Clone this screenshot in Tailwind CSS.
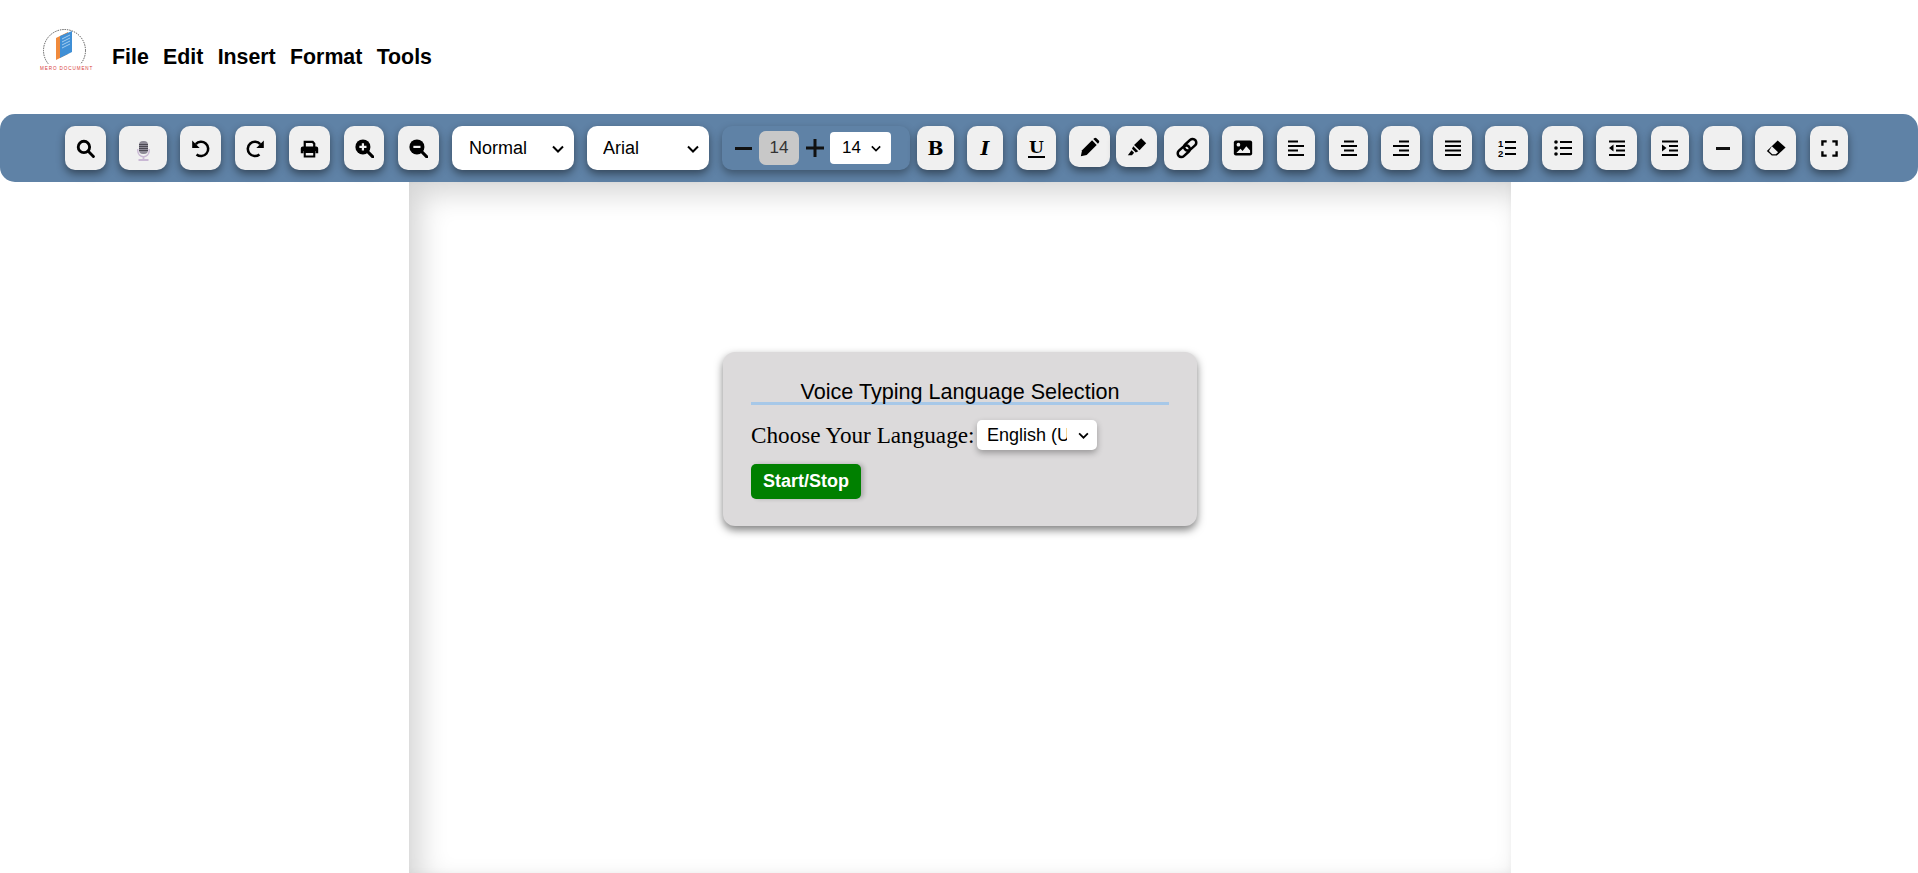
<!doctype html>
<html lang="en">
  <head>
    <meta charset="UTF-8" />
    <title>Mero Document</title>
    <script src="https://cdn.jsdelivr.net/npm/@tailwindcss/browser@4"></script>
  </head>
  <body class="h-[873px] overflow-hidden bg-white font-['Liberation_Sans',Arial,sans-serif] text-black">
    <!-- header -->
    <header class="flex h-[114px] items-center pl-[38px]">
      <svg class="mb-[16px] h-[46px] w-[58px]" viewBox="0 0 58 46" aria-label="logo">
        <circle cx="26.500" cy="24.500" r="21" fill="none" stroke="#444" stroke-width="0.9" stroke-dasharray="1.400 1" />
        <rect x="0" y="38" width="58" height="8" fill="#fff" />
        <polygon points="18,12 30,6 30,28 18,34" fill="#f08a3c" />
        <polygon points="22,10 34,5 34,26 22,32" fill="#3f8fd6" />
        <g stroke="#bcdcf5" stroke-width="0.8">
          <line x1="24" y1="13" x2="32" y2="9" />
          <line x1="24" y1="16" x2="32" y2="12" />
          <line x1="24" y1="19" x2="32" y2="15" />
          <line x1="24" y1="22" x2="32" y2="18" />
        </g>
        <text x="2" y="43.500" font-family="Liberation Sans" font-size="4.600" letter-spacing="0.900" fill="#d83c3c">MERO DOCUMENT</text>
      </svg>
      <nav class="ml-[16px] mt-[1px] flex gap-[14.300px] text-[21.330px] font-bold leading-none">
        <span>File</span>
        <span>Edit</span>
        <span>Insert</span>
        <span>Format</span>
        <span>Tools</span>
      </nav>
    </header>

    <!-- toolbar -->
    <div class="relative z-10 flex h-[68px] items-start rounded-[15px] bg-[#5f82a6] pl-[65px] pt-3">
      <button class="flex h-11 w-[41px] items-center justify-center rounded-[10px] bg-[#f0f0f0] shadow-[0_4px_8px_rgba(0,0,0,0.45)]">
        <svg class="size-[19px]" viewBox="0 0 24 24" fill="none" stroke="currentColor" stroke-width="3.600"><circle cx="10" cy="10" r="7.200" /><path d="M15.500 15.500 22 22" stroke-linecap="round" /></svg>
      </button>
      <button class="ml-[13px] flex h-11 w-12 items-center justify-center rounded-[10px] bg-[#f0f0f0] shadow-[0_4px_8px_rgba(0,0,0,0.45)]">
        <svg class="mt-[5px] h-[20px] w-[13px]" viewBox="0 0 13 20"><rect x="2" y="0" width="9" height="13" rx="4" fill="#8d8a96" /><path d="M2 3.500h9M2 5.500h9M2 7.500h9M2 9.500h9" stroke="#4c4953" stroke-width="1" /><path d="M.8 8v2a5.700 5.700 0 0 0 11.400 0V8" fill="none" stroke="#c9b8d4" stroke-width="1.400" /><path d="M6.500 15v3M1.500 19h10" stroke="#c9b8d4" stroke-width="1.800" /></svg>
      </button>
      <button class="ml-[13px] flex h-11 w-[41px] items-center justify-center rounded-[10px] bg-[#f0f0f0] shadow-[0_4px_8px_rgba(0,0,0,0.45)]">
        <svg class="size-[19px]" viewBox="0 0 24 24" fill="none"><path d="M6 6.500A9 9 0 1 1 7 19.500" stroke="currentColor" stroke-width="3.200" /><path d="M1.500 2v9.500H11z" fill="currentColor" /></svg>
      </button>
      <button class="ml-[14px] flex h-11 w-[41px] items-center justify-center rounded-[10px] bg-[#f0f0f0] shadow-[0_4px_8px_rgba(0,0,0,0.45)]">
        <svg class="size-[19px]" viewBox="0 0 24 24" fill="none"><path d="M18 6.500A9 9 0 1 0 17 19.500" stroke="currentColor" stroke-width="3.200" /><path d="M22.500 2v9.500H13z" fill="currentColor" /></svg>
      </button>
      <button class="ml-[13px] flex h-11 w-[41px] items-center justify-center rounded-[10px] bg-[#f0f0f0] shadow-[0_4px_8px_rgba(0,0,0,0.45)]">
        <svg class="size-[19px]" viewBox="0 0 24 24"><path d="M6 10V3.500h10L18 6v4" fill="none" stroke="currentColor" stroke-width="2.800" /><path d="M3.500 9.500h17A2.500 2.500 0 0 1 23 12v6h-3.500v-3h-15v3H1v-6a2.500 2.500 0 0 1 2.500-2.500z" fill="currentColor" /><path d="M6 16.500h12V22H6z" fill="none" stroke="currentColor" stroke-width="2.600" /></svg>
      </button>
      <button class="ml-[14px] flex h-11 w-[40px] items-center justify-center rounded-[10px] bg-[#f0f0f0] shadow-[0_4px_8px_rgba(0,0,0,0.45)]">
        <svg class="size-[19px]" viewBox="0 0 24 24"><circle cx="10" cy="10" r="9.500" fill="currentColor" /><path d="M16 16l6.500 6.500" stroke="currentColor" stroke-width="3.800" stroke-linecap="round" /><path d="M10 5.500v9M5.500 10h9" stroke="#f0f0f0" stroke-width="2.800" /></svg>
      </button>
      <button class="ml-[14px] flex h-11 w-[41px] items-center justify-center rounded-[10px] bg-[#f0f0f0] shadow-[0_4px_8px_rgba(0,0,0,0.45)]">
        <svg class="size-[19px]" viewBox="0 0 24 24"><circle cx="10" cy="10" r="9.500" fill="currentColor" /><path d="M16 16l6.500 6.500" stroke="currentColor" stroke-width="3.800" stroke-linecap="round" /><path d="M5.500 10h9" stroke="#f0f0f0" stroke-width="2.800" /></svg>
      </button>
      <div class="relative ml-[13px] h-11 w-[122px]">
        <select class="h-11 w-full appearance-none rounded-[10px] bg-white pl-[17px] text-[18px] shadow-[0_4px_8px_rgba(0,0,0,0.45)]">
          <option>Normal</option>
        </select>
        <svg class="pointer-events-none absolute right-[10px] top-[19px] h-[8px] w-[12px]" viewBox="0 0 12 8" fill="none" stroke="currentColor" stroke-width="2"><path d="M1 1.500l5 5 5-5" /></svg>
      </div>
      <div class="relative ml-[13px] h-11 w-[122px]">
        <select class="h-11 w-full appearance-none rounded-[10px] bg-white pl-4 text-[18px] shadow-[0_4px_8px_rgba(0,0,0,0.45)]">
          <option>Arial</option>
        </select>
        <svg class="pointer-events-none absolute right-[10px] top-[19px] h-[8px] w-[12px]" viewBox="0 0 12 8" fill="none" stroke="currentColor" stroke-width="2"><path d="M1 1.500l5 5 5-5" /></svg>
      </div>
      <!-- font size group -->
      <div class="ml-[13px] flex h-11 w-[188px] items-center rounded-[10px] bg-[#5f82a6] pl-[13px] shadow-[0_4px_8px_rgba(0,0,0,0.35)]">
        <span class="h-[3px] w-[17px] bg-[#111]"></span>
        <span class="ml-[7px] flex h-[34px] w-10 items-center justify-center rounded-[7px] bg-[#c8c8c8] text-[17px] text-[#333]">14</span>
        <svg class="ml-[7px] size-[18px]" viewBox="0 0 18 18"><path d="M9 0v18M0 9h18" stroke="#111" stroke-width="3" /></svg>
        <div class="relative ml-[6px] h-8 w-[61px]">
          <select class="h-8 w-full appearance-none rounded-[4px] bg-white pl-3 text-[17px]">
            <option>14</option>
          </select>
          <svg class="pointer-events-none absolute right-[10px] top-[13px] h-[7px] w-[10px]" viewBox="0 0 12 8" fill="none" stroke="currentColor" stroke-width="2"><path d="M1 1.500l5 5 5-5" /></svg>
        </div>
      </div>
      <button class="ml-[7px] flex h-11 w-[37px] items-center justify-center rounded-[10px] bg-[#f0f0f0] font-['DejaVu_Serif',serif] text-[19px] font-bold shadow-[0_4px_8px_rgba(0,0,0,0.45)]">B</button>
      <button class="ml-[13px] flex h-11 w-9 items-center justify-center rounded-[10px] bg-[#f0f0f0] font-['DejaVu_Serif',serif] text-[19px] font-bold italic shadow-[0_4px_8px_rgba(0,0,0,0.45)]">I</button>
      <button class="ml-[14px] flex h-11 w-[39px] items-center justify-center rounded-[10px] bg-[#f0f0f0] font-['DejaVu_Serif',serif] text-[17px] font-bold shadow-[0_4px_8px_rgba(0,0,0,0.45)]">
        <span class="border-b-[2.500px] border-black px-[1px] leading-[18px]">U</span>
      </button>
      <button class="ml-[13px] flex h-[41px] w-[41px] items-center justify-center rounded-[10px] bg-[#f0f0f0] shadow-[0_4px_8px_rgba(0,0,0,0.45)]">
        <svg class="size-[20px]" viewBox="0 0 24 24"><path d="M1 23l1.500-7L14.500 4l5.500 5.500L8 21.500z" fill="currentColor" /><path d="M16 2.500l1-1a2 2 0 0 1 2.800 0l2.700 2.700a2 2 0 0 1 0 2.800l-1 1z" fill="currentColor" /></svg>
      </button>
      <button class="ml-[6px] flex h-[41px] w-[41px] items-center justify-center rounded-[10px] bg-[#f0f0f0] shadow-[0_4px_8px_rgba(0,0,0,0.45)]">
        <svg class="size-[20px]" viewBox="0 0 24 24"><path d="M8.500 9.500L17 1.500l6 6-8 8.500z" fill="currentColor" /><path d="M7.500 11l6 6-3 1.500-4.500-4.500z" fill="currentColor" /><path d="M5.500 16l3 3L6 22H1z" fill="currentColor" /></svg>
      </button>
      <button class="ml-[7px] flex h-11 w-[45px] items-center justify-center rounded-[10px] bg-[#f0f0f0] shadow-[0_4px_8px_rgba(0,0,0,0.45)]">
        <svg class="size-[22px]" viewBox="0 0 24 24" fill="none" stroke="currentColor" stroke-width="2.800"><rect x="-7.500" y="-4" width="15" height="8" rx="4" transform="translate(8.500 15.500) rotate(-42)" /><rect x="-7.500" y="-4" width="15" height="8" rx="4" transform="translate(15.500 8.500) rotate(-42)" /></svg>
      </button>
      <button class="ml-[13px] flex h-11 w-[41px] items-center justify-center rounded-[10px] bg-[#f0f0f0] shadow-[0_4px_8px_rgba(0,0,0,0.45)]">
        <svg class="size-[20px]" viewBox="0 0 24 24"><rect x="1" y="3" width="22" height="18" rx="2.500" fill="currentColor" /><circle cx="6.500" cy="8" r="2.200" fill="#f0f0f0" /><path d="M4 18l5-5 2.500 2.500L16 10l4.500 5v3z" fill="#f0f0f0" /></svg>
      </button>
      <button class="ml-[14px] flex h-11 w-[38px] items-center justify-center rounded-[10px] bg-[#f0f0f0] shadow-[0_4px_8px_rgba(0,0,0,0.45)]">
        <svg class="size-[16px]" viewBox="0 0 16 16"><path d="M0 1.500h10M0 6h16M0 10.500h10M0 15h16" stroke="currentColor" stroke-width="2" /></svg>
      </button>
      <button class="ml-[14px] flex h-11 w-[39px] items-center justify-center rounded-[10px] bg-[#f0f0f0] shadow-[0_4px_8px_rgba(0,0,0,0.45)]">
        <svg class="size-[16px]" viewBox="0 0 16 16"><path d="M3 1.500h10M0 6h16M3 10.500h10M0 15h16" stroke="currentColor" stroke-width="2" /></svg>
      </button>
      <button class="ml-[13px] flex h-11 w-[39px] items-center justify-center rounded-[10px] bg-[#f0f0f0] shadow-[0_4px_8px_rgba(0,0,0,0.45)]">
        <svg class="size-[16px]" viewBox="0 0 16 16"><path d="M6 1.500h10M0 6h16M6 10.500h10M0 15h16" stroke="currentColor" stroke-width="2" /></svg>
      </button>
      <button class="ml-[13px] flex h-11 w-[39px] items-center justify-center rounded-[10px] bg-[#f0f0f0] shadow-[0_4px_8px_rgba(0,0,0,0.45)]">
        <svg class="size-[16px]" viewBox="0 0 16 16"><path d="M0 1.500h16M0 6h16M0 10.500h16M0 15h16" stroke="currentColor" stroke-width="2" /></svg>
      </button>
      <button class="ml-[13px] flex h-11 w-[43px] items-center justify-center rounded-[10px] bg-[#f0f0f0] shadow-[0_4px_8px_rgba(0,0,0,0.45)]">
        <svg class="size-[18px]" viewBox="0 0 18 18"><path d="M7 3h11M7 9h11M7 15h11" stroke="currentColor" stroke-width="2.200" /><text x="0" y="8" font-family="Liberation Sans" font-size="9.500" font-weight="700">1</text><text x="0" y="17.500" font-family="Liberation Sans" font-size="9.500" font-weight="700">2</text></svg>
      </button>
      <button class="ml-[14px] flex h-11 w-[41px] items-center justify-center rounded-[10px] bg-[#f0f0f0] shadow-[0_4px_8px_rgba(0,0,0,0.45)]">
        <svg class="size-[18px]" viewBox="0 0 18 18"><circle cx="2" cy="3" r="1.800" fill="currentColor" /><circle cx="2" cy="9" r="1.800" fill="currentColor" /><circle cx="2" cy="15" r="1.800" fill="currentColor" /><path d="M6 3h12M6 9h12M6 15h12" stroke="currentColor" stroke-width="2.200" /></svg>
      </button>
      <button class="ml-[13px] flex h-11 w-[41px] items-center justify-center rounded-[10px] bg-[#f0f0f0] shadow-[0_4px_8px_rgba(0,0,0,0.45)]">
        <svg class="size-[16px]" viewBox="0 0 16 16"><path d="M0 1.500h16M7 6h9M7 10.500h9M0 15h16" stroke="currentColor" stroke-width="2" /><path d="M4.500 4.500v7L0 8z" fill="currentColor" /></svg>
      </button>
      <button class="ml-[14px] flex h-11 w-[38px] items-center justify-center rounded-[10px] bg-[#f0f0f0] shadow-[0_4px_8px_rgba(0,0,0,0.45)]">
        <svg class="size-[16px]" viewBox="0 0 16 16"><path d="M0 1.500h16M7 6h9M7 10.500h9M0 15h16" stroke="currentColor" stroke-width="2" /><path d="M0 4.500v7L4.500 8z" fill="currentColor" /></svg>
      </button>
      <button class="ml-[14px] flex h-11 w-[39px] items-center justify-center rounded-[10px] bg-[#f0f0f0] shadow-[0_4px_8px_rgba(0,0,0,0.45)]">
        <span class="h-[3px] w-[14px] bg-[#111]"></span>
      </button>
      <button class="ml-[13px] flex h-11 w-[41px] items-center justify-center rounded-[10px] bg-[#f0f0f0] shadow-[0_4px_8px_rgba(0,0,0,0.45)]">
        <svg class="size-[20px]" viewBox="0 0 24 24"><path d="M14 3l9.500 8.500L13 21H7L1 15.500z" fill="currentColor" /><path d="M7 10l7.500 7-2.800 2.500H7.500L3.500 15.500z" fill="#f0f0f0" /></svg>
      </button>
      <button class="ml-[14px] flex h-11 w-[38px] items-center justify-center rounded-[10px] bg-[#f0f0f0] shadow-[0_4px_8px_rgba(0,0,0,0.45)]">
        <svg class="size-[17px]" viewBox="0 0 18 18" fill="none" stroke="currentColor" stroke-width="2.500"><path d="M1.500 6V1.500H6M12 1.500h4.500V6M16.500 12v4.500H12M6 16.500H1.500V12" /></svg>
      </button>
    </div>

    <!-- document page -->
    <main class="ml-[409px] flex h-[691px] w-[1102px] justify-center bg-white shadow-[inset_12px_12px_28px_rgba(0,0,0,0.16),inset_-1px_-1px_6px_rgba(0,0,0,0.03)]">
      <section class="mt-[170px] h-[174px] w-[474px] rounded-[12px] bg-[#dcdadb] px-[28px] pt-[24px] shadow-[0_4px_8px_rgba(0,0,0,0.5)]">
        <h2 class="h-[29px] border-b-[3px] border-[#a7c8e8] text-center text-[21.600px] leading-[32px]">Voice Typing Language Selection</h2>
        <div class="mt-[15px] flex items-center">
          <label class="w-[226px] font-['Liberation_Serif',Georgia,serif] text-[23.200px] leading-[30px]">Choose Your Language:</label>
          <div class="relative h-[30px] w-[120px]">
            <select class="h-[30px] w-full appearance-none rounded-[5px] bg-white pl-[10px] pr-[30px] text-[18px] shadow-[0_3px_6px_rgba(0,0,0,0.3)]">
              <option>English (US)</option>
            </select>
            <svg class="pointer-events-none absolute right-[8px] top-[12px] h-[7px] w-[11px]" viewBox="0 0 12 8" fill="none" stroke="currentColor" stroke-width="2"><path d="M1 1.500l5 5 5-5" /></svg>
          </div>
        </div>
        <button class="mt-[14px] block h-[35px] w-[110px] rounded-[5px] bg-[#008000] text-[18px] font-bold text-white shadow-[3px_0_4px_rgba(0,0,0,0.2)]">Start/Stop</button>
      </section>
    </main>
  </body>
</html>
